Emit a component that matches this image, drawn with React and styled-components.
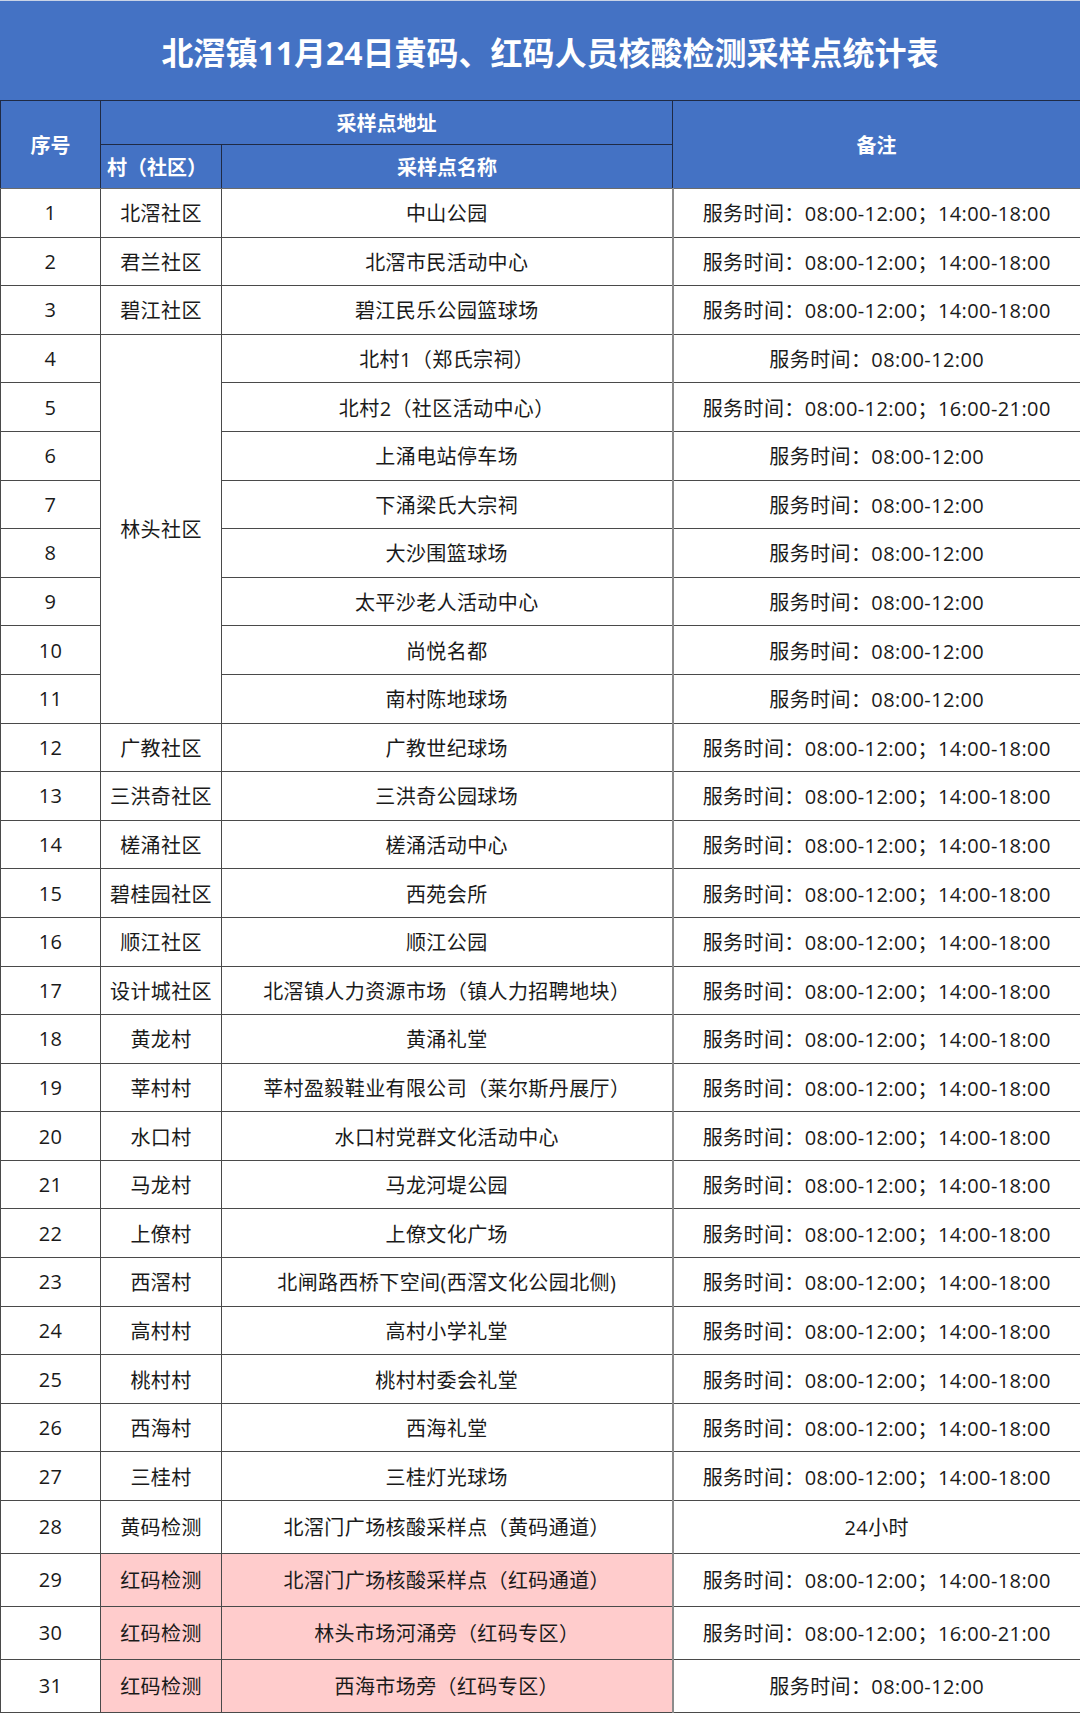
import React from 'react'
import styled, { createGlobalStyle } from 'styled-components'

const GlobalStyle = createGlobalStyle`
    body {
        margin: 0;
        background: #fff;
        font-family: "Open Sans", "Noto Sans CJK SC", sans-serif;
    }
`

const StyledPage = styled.div`
    width: 1080px;
`

const StyledTitle = styled.div`
    display: flex;
    align-items: center;
    justify-content: center;
    height: 99px;
    padding-left: 20px;
    border-top: 1px solid #c9d3e6;
    background: #4472c4;
    color: #fff;
    font-size: 32px;
    font-weight: 700;
`

const StyledTable = styled.table`
    width: 1080px;
    border-collapse: collapse;
    table-layout: fixed;
    color: #1a1a1a;
    font-size: 20px;
    letter-spacing: .4px;
`

const StyledHeadCell = styled.th`
    height: ${({ h }) => h || 42}px;
    padding: 0 ${({ left }) => left ? '6px' : '0'};
    border: 1px solid #1f2a44;
    border-bottom-color: ${({ last }) => last ? '#6b6b6b' : '#1f2a44'};
    background: #4472c4;
    color: #fff;
    font-size: 20px;
    font-weight: 700;
    letter-spacing: 0;
    text-align: ${({ left }) => left ? 'left' : 'center'};
    white-space: nowrap;
`

const StyledRow = styled.tr`
    height: ${({ tall }) => tall ? 52.9 : 48.6}px;
`

const StyledCell = styled.td`
    padding: 0;
    border: 1px solid #4a4a4a;
    border-right-color: ${({ soft }) => soft ? '#8c8c8c' : '#4a4a4a'};
    border-right-width: ${({ soft }) => soft ? 2 : 1}px;
    background: ${({ red }) => red ? '#ffcccc' : '#fff'};
    text-align: center;
    white-space: nowrap;
`

const T1 = '服务时间：08:00-12:00；14:00-18:00'
const T2 = '服务时间：08:00-12:00'
const T3 = '服务时间：08:00-12:00；16:00-21:00'

const rows = [
    ['北滘社区', '中山公园', T1],
    ['君兰社区', '北滘市民活动中心', T1],
    ['碧江社区', '碧江民乐公园篮球场', T1],
    ['林头社区', '北村1（郑氏宗祠）', T2, 8],
    [null, '北村2（社区活动中心）', T3],
    [null, '上涌电站停车场', T2],
    [null, '下涌梁氏大宗祠', T2],
    [null, '大沙围篮球场', T2],
    [null, '太平沙老人活动中心', T2],
    [null, '尚悦名都', T2],
    [null, '南村陈地球场', T2],
    ['广教社区', '广教世纪球场', T1],
    ['三洪奇社区', '三洪奇公园球场', T1],
    ['槎涌社区', '槎涌活动中心', T1],
    ['碧桂园社区', '西苑会所', T1],
    ['顺江社区', '顺江公园', T1],
    ['设计城社区', '北滘镇人力资源市场（镇人力招聘地块）', T1],
    ['黄龙村', '黄涌礼堂', T1],
    ['莘村村', '莘村盈毅鞋业有限公司（莱尔斯丹展厅）', T1],
    ['水口村', '水口村党群文化活动中心', T1],
    ['马龙村', '马龙河堤公园', T1],
    ['上僚村', '上僚文化广场', T1],
    ['西滘村', '北闸路西桥下空间(西滘文化公园北侧)', T1],
    ['高村村', '高村小学礼堂', T1],
    ['桃村村', '桃村村委会礼堂', T1],
    ['西海村', '西海礼堂', T1],
    ['三桂村', '三桂灯光球场', T1],
    ['黄码检测', '北滘门广场核酸采样点（黄码通道）', '24小时'],
    ['红码检测', '北滘门广场核酸采样点（红码通道）', T1, 1, true],
    ['红码检测', '林头市场河涌旁（红码专区）', T3, 1, true],
    ['红码检测', '西海市场旁（红码专区）', T2, 1, true],
]

export default () => {
    return <StyledPage>
        <GlobalStyle />
        <StyledTitle>北滘镇11月24日黄码、红码人员核酸检测采样点统计表</StyledTitle>
        <StyledTable>
            <colgroup>
                <col style={{ width: 100 }} />
                <col style={{ width: 121 }} />
                <col style={{ width: 451 }} />
                <col style={{ width: 408 }} />
            </colgroup>
            <thead>
                <tr>
                    <StyledHeadCell rowSpan={2} h={43} last>序号</StyledHeadCell>
                    <StyledHeadCell colSpan={2} h={43}>采样点地址</StyledHeadCell>
                    <StyledHeadCell rowSpan={2} h={43} last>备注</StyledHeadCell>
                </tr>
                <tr>
                    <StyledHeadCell h={43} left last>村（社区）</StyledHeadCell>
                    <StyledHeadCell h={43} last>采样点名称</StyledHeadCell>
                </tr>
            </thead>
            <tbody>
                {rows.map(([village, place, note, span, red], i) => (
                    <StyledRow key={i} tall={i >= 27}>
                        <StyledCell>{i + 1}</StyledCell>
                        {village && <StyledCell rowSpan={span || 1} red={red}>{village}</StyledCell>}
                        <StyledCell red={red} soft>{place}</StyledCell>
                        <StyledCell>{note}</StyledCell>
                    </StyledRow>
                ))}
            </tbody>
        </StyledTable>
    </StyledPage>
}
